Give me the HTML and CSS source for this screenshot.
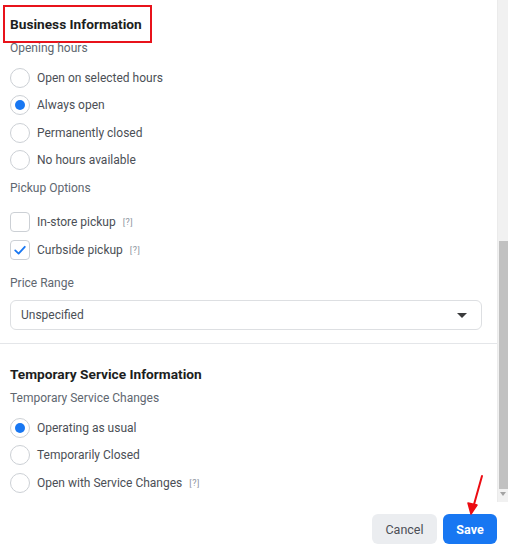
FILE: index.html
```html
<!DOCTYPE html>
<html>
<head>
<meta charset="utf-8">
<link rel="stylesheet" href="styles.css">
</head>
<body>
<div class="dialog">
  <div class="scroll-area">
    <div class="content">
      <div class="section">
        <h2 class="section-title boxed">Business Information</h2>
        <div class="field-label first">Opening hours</div>
        <div class="options radios">
          <div class="opt"><span class="radio"></span><span class="opt-text">Open on selected hours</span></div>
          <div class="opt"><span class="radio checked"></span><span class="opt-text">Always open</span></div>
          <div class="opt"><span class="radio"></span><span class="opt-text">Permanently closed</span></div>
          <div class="opt"><span class="radio"></span><span class="opt-text">No hours available</span></div>
        </div>
        <div class="field-label pickup">Pickup Options</div>
        <div class="options checks">
          <div class="opt check-opt"><span class="checkbox"></span><span class="opt-text">In-store pickup</span><span class="help">[?]</span></div>
          <div class="opt check-opt"><span class="checkbox checked"><svg viewBox="0 0 20 20" width="20" height="20"><path d="M5.2 10.4 L8.6 13.6 L14.8 6.8" fill="none" stroke="#1877f2" stroke-width="1.8" stroke-linecap="round" stroke-linejoin="round"/></svg></span><span class="opt-text">Curbside pickup</span><span class="help">[?]</span></div>
        </div>
        <div class="field-label price">Price Range</div>
        <div class="select">
          <span class="select-text">Unspecified</span>
          <span class="caret"></span>
        </div>
      </div>
      <div class="divider"></div>
      <div class="section">
        <h2 class="section-title second">Temporary Service Information</h2>
        <div class="field-label temp">Temporary Service Changes</div>
        <div class="options radios">
          <div class="opt"><span class="radio checked"></span><span class="opt-text">Operating as usual</span></div>
          <div class="opt"><span class="radio"></span><span class="opt-text">Temporarily Closed</span></div>
          <div class="opt"><span class="radio"></span><span class="opt-text">Open with Service Changes</span><span class="help">[?]</span></div>
        </div>
      </div>
    </div>
    <div class="scrollbar">
      <div class="sb-space"></div>
      <div class="sb-thumb"></div>
      <div class="sb-arrow"></div>
    </div>
  </div>
  <div class="footer">
    <button class="btn cancel">Cancel</button>
    <button class="btn save">Save</button>
  </div>
  <svg class="annotation-arrow" width="40" height="50" viewBox="0 0 40 50">
    <line x1="22" y1="6" x2="13" y2="38" stroke="#ec0c12" stroke-width="2" stroke-linecap="round"/>
    <path d="M8 33 L11 44 L17 35 Z" fill="#ec0c12" stroke="#ec0c12" stroke-width="1.5" stroke-linejoin="round"/>
  </svg>
</div>
</body>
</html>
```

FILE: styles.css
```css
* { box-sizing: border-box; }
html, body { margin: 0; padding: 0; background: #ffffff; }
body {
  font-family: Roboto, "Liberation Sans", Arial, sans-serif;
  color: #444950;
  width: 508px;
  height: 551px;
  overflow: hidden;
}
.dialog { position: relative; width: 508px; height: 551px; }
.scroll-area { display: flex; height: 502px; }
.content { flex: 1; min-width: 0; }
.section { padding: 0 15px 0 10px; }
.section-title {
  margin: 0;
  font-size: 13.7px;
  line-height: 18px;
  font-weight: 700;
  color: #1c1e21;
}
.section-title.boxed {
  display: inline-block;
  margin-top: 5px;
  margin-left: -7px;
  border: 2px solid #e8131b;
  padding: 8px 8px 8px 5px;
}
.field-label {
  font-size: 12px;
  line-height: 16px;
  color: #606770;
}
.field-label.first { margin-top: -3px; }
.field-label.pickup { margin-top: 6px; }
.field-label.price { margin-top: 11px; }
.field-label.temp { margin-top: 7px; }
.options.radios { margin-top: 8px; }
.options.checks { margin-top: 12px; }
.opt {
  display: flex;
  align-items: center;
  height: 27.5px;
}
.check-opt { height: 28px; }
.radio {
  flex: none;
  width: 20px;
  height: 20px;
  border-radius: 50%;
  border: 1px solid #ccd0d5;
  display: flex;
  align-items: center;
  justify-content: center;
  background: #fff;
}
.radio.checked::after {
  content: "";
  width: 10px;
  height: 10px;
  border-radius: 50%;
  background: #1877f2;
}
.checkbox {
  flex: none;
  width: 20px;
  height: 20px;
  border-radius: 4px;
  border: 1px solid #ccd0d5;
  position: relative;
  background: #fff;
}
.checkbox svg { display: block; margin: -1px; }
.opt-text {
  margin-left: 7px;
  font-size: 12px;
  color: #4b4f56;
}
.help {
  margin-left: 7px;
  font-size: 9px;
  color: #8d949e;
  letter-spacing: 0.5px;
}
.select {
  margin-top: 9px;
  height: 30px;
  border: 1px solid #dddfe2;
  border-radius: 6px;
  display: flex;
  align-items: center;
  justify-content: space-between;
  padding: 0 14px 0 10px;
}
.select-text { font-size: 12px; color: #4b4f56; }
.caret {
  width: 0;
  height: 0;
  border-left: 5px solid transparent;
  border-right: 5px solid transparent;
  border-top: 5px solid #3a3b3c;
}
.divider {
  height: 1px;
  background: #e4e6e9;
  margin-top: 13px;
}
.section-title.second { margin-top: 21px; }
.scrollbar {
  flex: none;
  width: 11px;
  background: #f1f1f1;
  border-left: 1px solid #ebebeb;
  display: flex;
  flex-direction: column;
  align-items: center;
}
.sb-space { height: 241px; flex: none; }
.sb-thumb { width: 9px; height: 248px; background: #c1c1c1; flex: none; }
.sb-arrow {
  margin-top: 3px;
  width: 0;
  height: 0;
  border-left: 3.5px solid transparent;
  border-right: 3.5px solid transparent;
  border-top: 4px solid #a3a3a3;
}
.footer {
  display: flex;
  justify-content: flex-end;
  gap: 6px;
  padding: 12px 11px 0 0;
}
.btn {
  height: 30px;
  border: none;
  border-radius: 6px;
  font-family: Roboto, "Liberation Sans", Arial, sans-serif;
  font-size: 12.5px;
  padding: 0;
}
.cancel { width: 65px; background: #ebedf0; color: #4b4f56; }
.save { width: 54px; background: #1877f2; color: #fff; font-weight: 700; }
.annotation-arrow {
  position: absolute;
  left: 460px;
  top: 470px;
}
```
